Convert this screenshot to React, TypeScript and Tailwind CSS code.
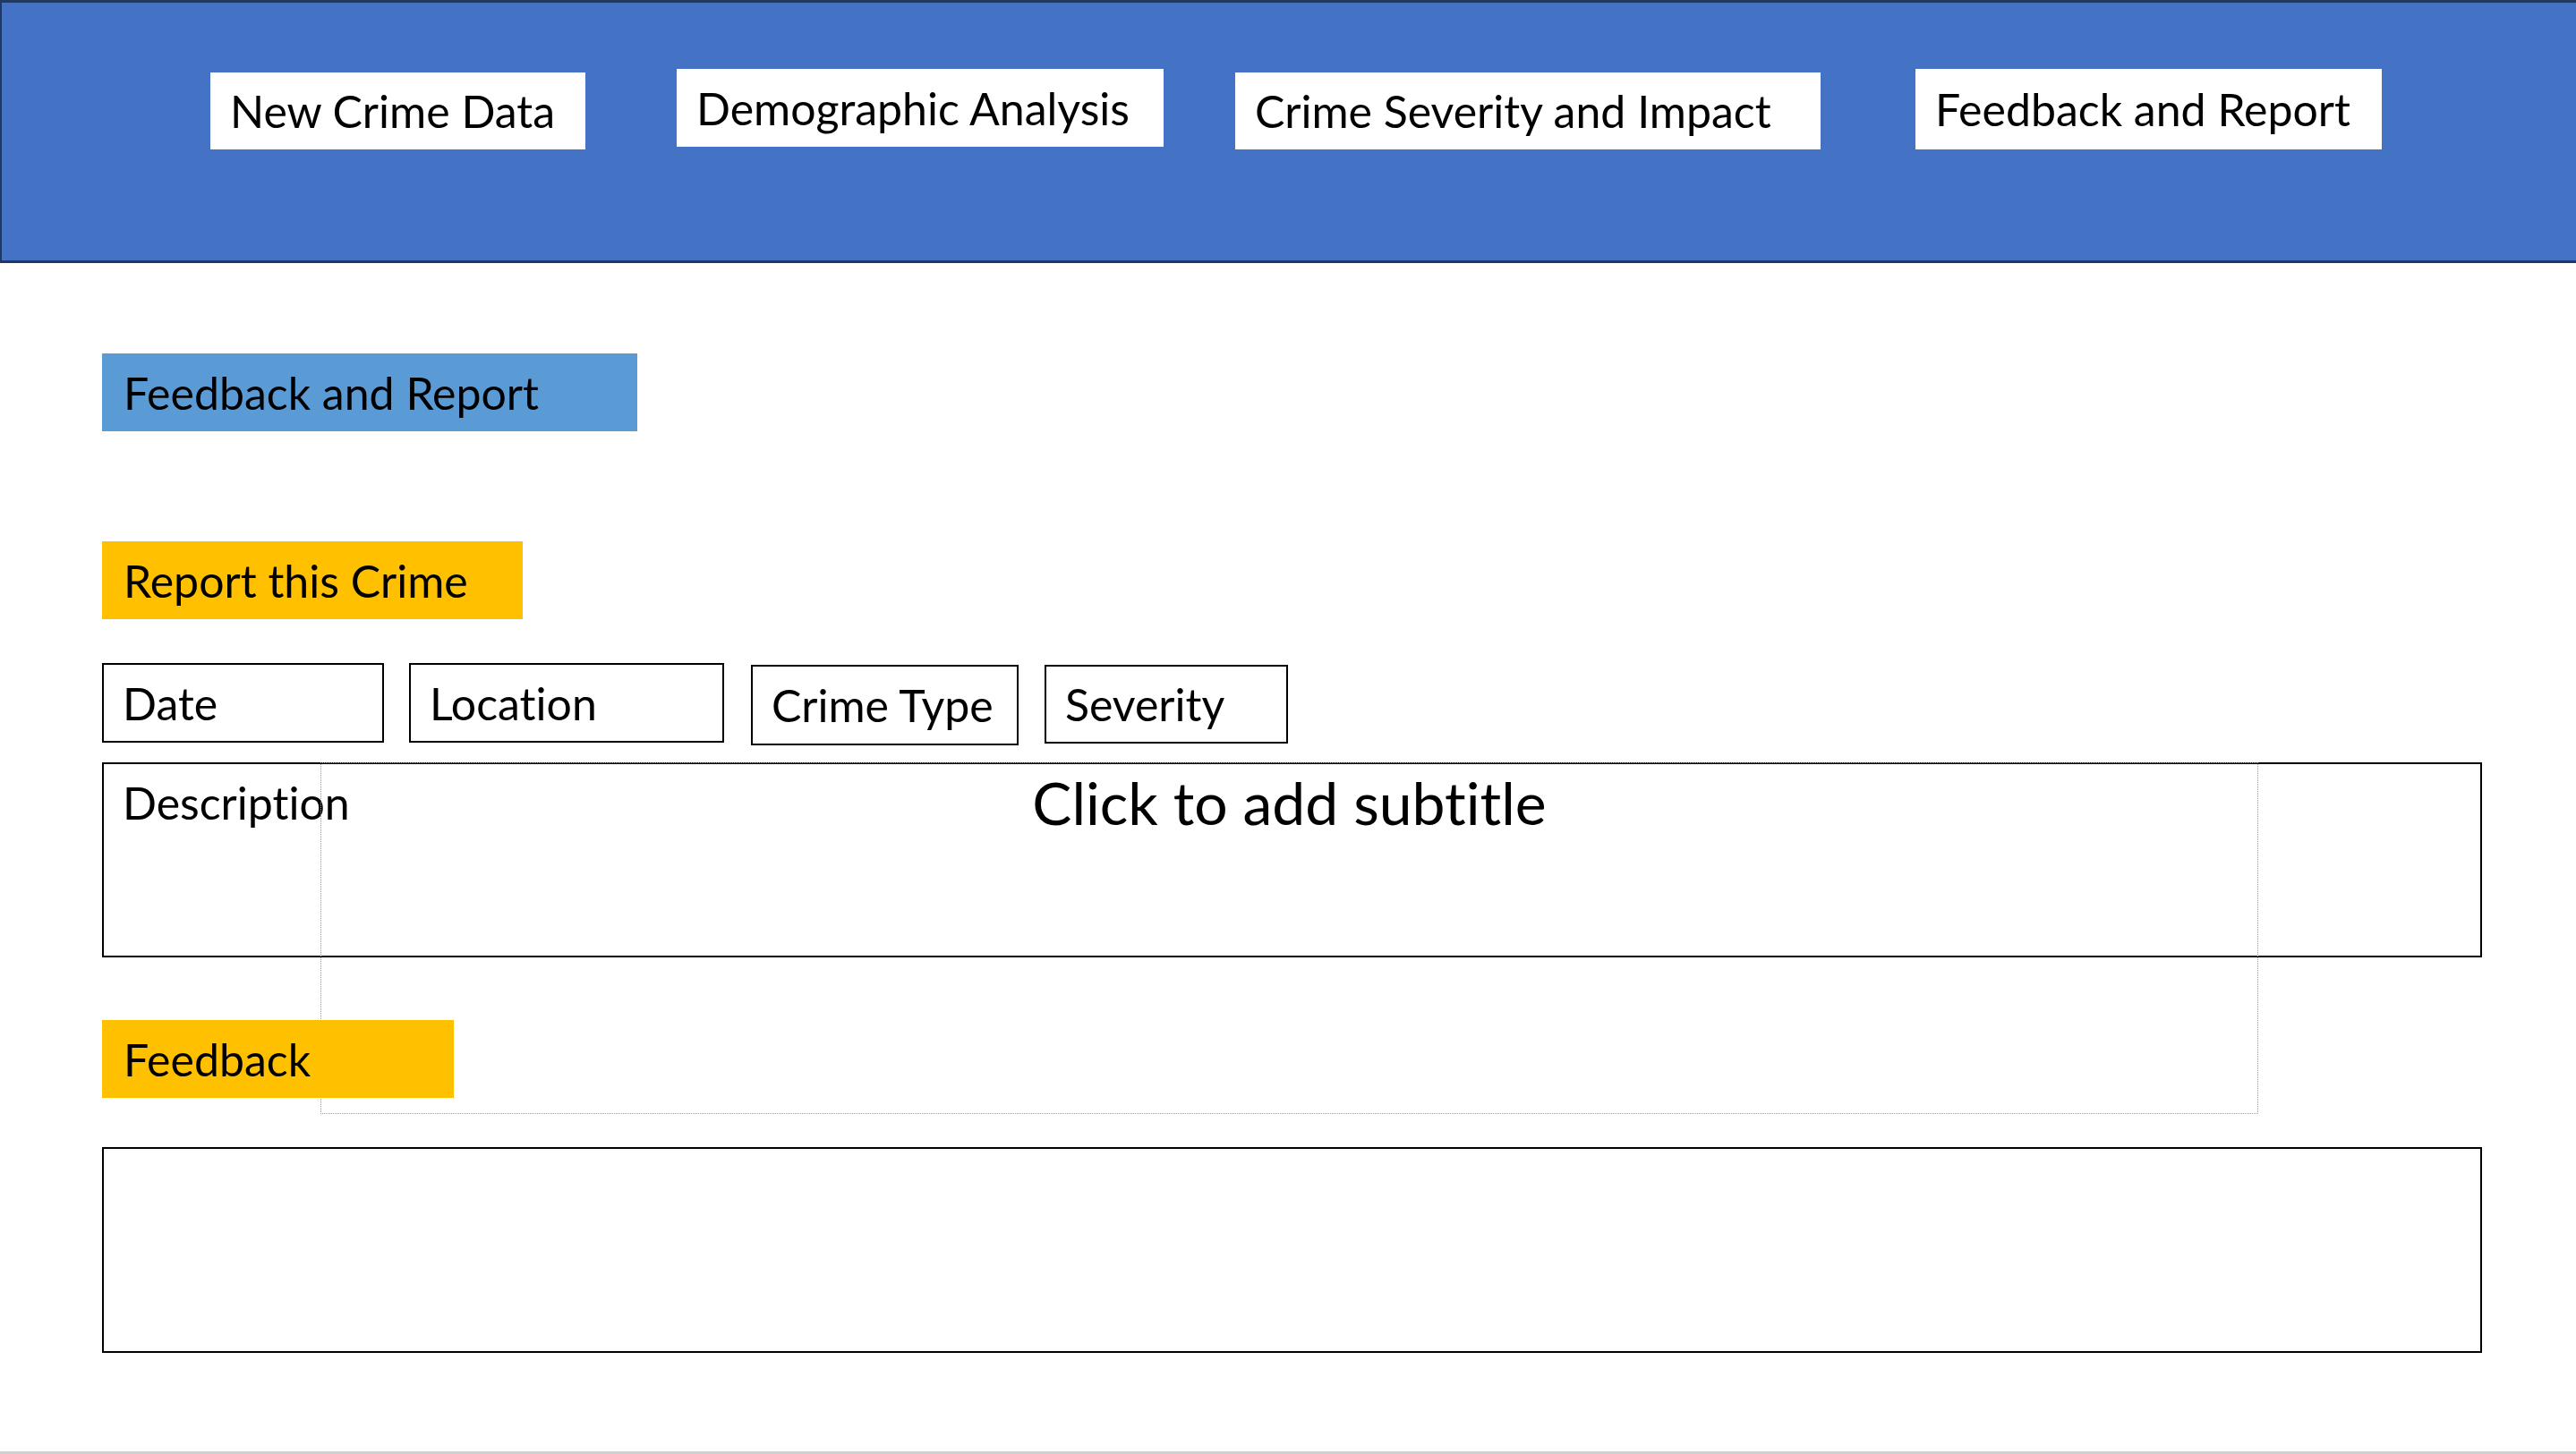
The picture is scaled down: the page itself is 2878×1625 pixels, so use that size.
import React from 'react';

const navItems = [
  { label: 'New Crime Data', className: 'ml-[233px] mt-[78px] w-[419px] h-[86px]' },
  { label: 'Demographic Analysis', className: 'ml-[102px] mt-[74px] w-[544px] h-[87px]' },
  { label: 'Crime Severity and Impact', className: 'ml-[80px] mt-[78px] w-[654px] h-[86px]' },
  { label: 'Feedback and Report', className: 'ml-[106px] mt-[74px] w-[521px] h-[90px]' },
];

const fields = [
  { label: 'Date', className: 'w-[315px] h-[89px]' },
  { label: 'Location', className: 'ml-[28px] w-[352px] h-[89px]' },
  { label: 'Crime Type', className: 'ml-[30px] mt-[2px] w-[299px] h-[90px]' },
  { label: 'Severity', className: 'ml-[29px] mt-[2px] w-[272px] h-[88px]' },
];

function Header() {
  return (
    <header className="h-[294px] bg-[#4472c4] border-t-[3px] border-b-[3px] border-l-2 border-[#1f3864] flex items-start">
      {navItems.map((item) => (
        <div
          key={item.label}
          className={`${item.className} bg-white flex items-center pl-[22px] text-[50px] leading-none text-black whitespace-nowrap`}
        >
          {item.label}
        </div>
      ))}
    </header>
  );
}

function Tag({ label, color, width }: { label: string; color: string; width: string }) {
  return (
    <div className={`relative z-10 ${color} ${width} h-[87px] flex items-center pl-[24px] text-[50px] leading-none text-black whitespace-nowrap`}>
      {label}
    </div>
  );
}

export default function App() {
  return (
    <div className="relative w-[2878px] h-[1625px] bg-white overflow-hidden flex flex-col font-['Lato','Liberation_Sans',sans-serif] [font-variant-ligatures:none]">
      <Header />

      <main className="pl-[114px] flex flex-col items-start">
        <div className="mt-[101px]">
          <Tag label="Feedback and Report" color="bg-[#5b9bd5]" width="w-[598px]" />
        </div>

        <div className="mt-[123px]">
          <Tag label="Report this Crime" color="bg-[#ffc000]" width="w-[470px]" />
        </div>

        {/* field row */}
        <div className="mt-[49px] flex items-start">
          {fields.map((f) => (
            <div
              key={f.label}
              className={`${f.className} border-2 border-black flex items-center pl-[21px] text-[50px] leading-none text-black whitespace-nowrap`}
            >
              {f.label}
            </div>
          ))}
        </div>

        <div className="mt-[19px] w-[2659px] h-[218px] border-2 border-black pl-[21px] pt-[18px] text-[50px] leading-none text-black">
          Description
        </div>

        <div className="mt-[70px]">
          <Tag label="Feedback" color="bg-[#ffc000]" width="w-[393px]" />
        </div>

        <div className="mt-[55px] w-[2659px] h-[230px] border-2 border-black" />
      </main>

      <div className="flex-1" />
      <div className="h-[3px] bg-[#d0d0d0]" />

      {/* subtitle placeholder, drawn over the description box */}
      <div className="absolute left-[358px] top-[852px] w-[2165px] h-[393px] border border-dotted border-[#9a9a9a] flex justify-center pt-[11px]">
        <span className="text-[66px] leading-none text-black whitespace-nowrap">Click to add subtitle</span>
      </div>
    </div>
  );
}
